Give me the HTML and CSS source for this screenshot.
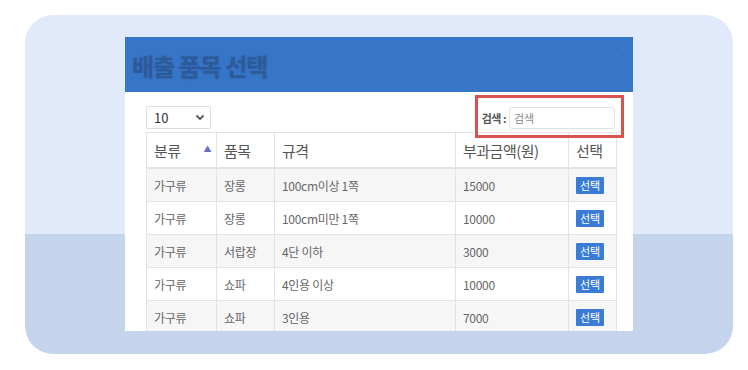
FILE: index.html
```html
<!DOCTYPE html>
<html>
<head>
  <title>배출 품목 선택</title>
  <link rel="stylesheet" href="styles.css">
</head>
<body>
  <div class="stage">
    <div class="card">
      <div class="modal">
        <div class="modal-header">
          <h2 class="modal-title">배출 품목 선택</h2>
          <span class="close">&times;</span>
        </div>
        <div class="modal-body">
          <div class="toolbar">
            <div class="page-size">
              <span>10</span>
              <svg width="10" height="7" viewBox="0 0 10 7"><path d="M1.5 1.5 L5 5 L8.5 1.5" fill="none" stroke="#555" stroke-width="1.8"/></svg>
            </div>
            <div class="search">
              <label for="q">검색 :</label>
              <input type="text" id="q" placeholder="검색">
            </div>
            <div class="highlight"></div>
          </div>
          <table class="item-table">
            <colgroup>
              <col style="width: 70px">
              <col style="width: 58px">
              <col style="width: 181px">
              <col style="width: 113px">
              <col style="width: 48px">
            </colgroup>
            <thead>
              <tr>
                <th class="sorted">분류 <span class="sort-arrow">&#9650;</span></th>
                <th>품목</th>
                <th>규격</th>
                <th>부과금액(원)</th>
                <th>선택</th>
              </tr>
            </thead>
            <tbody>
              <tr><td>가구류</td><td>장롱</td><td>100cm이상 1쪽</td><td>15000</td><td><button class="pick-btn">선택</button></td></tr>
              <tr><td>가구류</td><td>장롱</td><td>100cm미만 1쪽</td><td>10000</td><td><button class="pick-btn">선택</button></td></tr>
              <tr><td>가구류</td><td>서랍장</td><td>4단 이하</td><td>3000</td><td><button class="pick-btn">선택</button></td></tr>
              <tr><td>가구류</td><td>쇼파</td><td>4인용 이상</td><td>10000</td><td><button class="pick-btn">선택</button></td></tr>
              <tr><td>가구류</td><td>쇼파</td><td>3인용</td><td>7000</td><td><button class="pick-btn">선택</button></td></tr>
            </tbody>
          </table>
        </div>
      </div>
    </div>
  </div>
</body>
</html>
```

FILE: styles.css
```css
body {
  margin: 0;
  background-color: #fff;
  font-family: "Noto Sans CJK KR", "Noto Sans", sans-serif;
}

.stage {
  padding: 15px 15px 16px 25px;
}

.card {
  width: 708px;
  height: 339px;
  border-radius: 28px;
  background: linear-gradient(to bottom, #e0eafa 0, #e0eafa 219px, #c3d4ec 219px, #c3d4ec 100%);
  padding: 22px 0 0 100px;
  box-sizing: border-box;
  overflow: hidden;
}

.modal {
  width: 508px;
  height: 294px;
  background-color: #fff;
  overflow: hidden;
}

.modal-header {
  height: 55px;
  background-color: #3776c7;
  display: flex;
  align-items: flex-start;
  justify-content: space-between;
  padding: 0 7px;
}

.modal-title {
  margin: 11px 0 0;
  font-size: 24px;
  font-weight: bold;
  color: #2d5a98;
  letter-spacing: -1px;
  text-shadow: 0 0 2px rgba(44, 91, 156, 0.7);
}

.close {
  margin-top: 8px;
  font-size: 18px;
  color: #4478bf;
  line-height: 1;
}

.modal-body {
  padding: 14px 17px 0 21px;
}

.toolbar {
  position: relative;
  display: flex;
  justify-content: space-between;
  align-items: center;
  height: 23px;
  margin-bottom: 3px;
}

.page-size {
  width: 65px;
  height: 23px;
  box-sizing: border-box;
  border: 1px solid #ddd;
  border-radius: 2px;
  display: flex;
  align-items: center;
  justify-content: space-between;
  padding: 0 5px 0 7px;
  font-size: 13px;
  color: #333;
}

.search {
  display: flex;
  align-items: center;
  gap: 3px;
  margin-right: 1px;
}

.search label {
  font-size: 11px;
  font-weight: bold;
  color: #555;
  letter-spacing: -0.5px;
}

.search input {
  width: 106px;
  height: 22px;
  box-sizing: border-box;
  border: 1px solid #e2e2e2;
  border-radius: 3px;
  padding: 0 4px;
  font-family: inherit;
  font-size: 11px;
}

.search input::placeholder {
  color: #888;
}

.highlight {
  position: absolute;
  left: 329px;
  top: -11px;
  width: 149px;
  height: 43px;
  box-sizing: border-box;
  border: 3px solid #d8524f;
}

.item-table {
  width: 470px;
  border-collapse: collapse;
  table-layout: fixed;
}

.item-table th,
.item-table td {
  border: 1px solid #e3e3e3;
  text-align: left;
  padding: 0 7px;
  color: #666;
  white-space: nowrap;
  overflow: hidden;
}

.item-table th {
  height: 34px;
  font-size: 15px;
  font-weight: normal;
  color: #555;
  letter-spacing: -0.5px;
  border-bottom: 2px solid #e3e3e3;
}

.item-table th.sorted {
  position: relative;
}

.sort-arrow {
  position: absolute;
  right: 5px;
  top: 10px;
  font-size: 8px;
  color: #6b6bc9;
}

.item-table td {
  height: 32px;
  font-size: 12px;
  letter-spacing: -0.3px;
}

.item-table tbody tr:nth-child(odd) td {
  background-color: #f6f6f6;
}

.pick-btn {
  display: block;
  background-color: #3a7bd5;
  color: #fff;
  border: none;
  border-radius: 1px;
  font-family: inherit;
  font-size: 11px;
  padding: 0 4px;
  height: 17px;
  line-height: 17px;
}
```
